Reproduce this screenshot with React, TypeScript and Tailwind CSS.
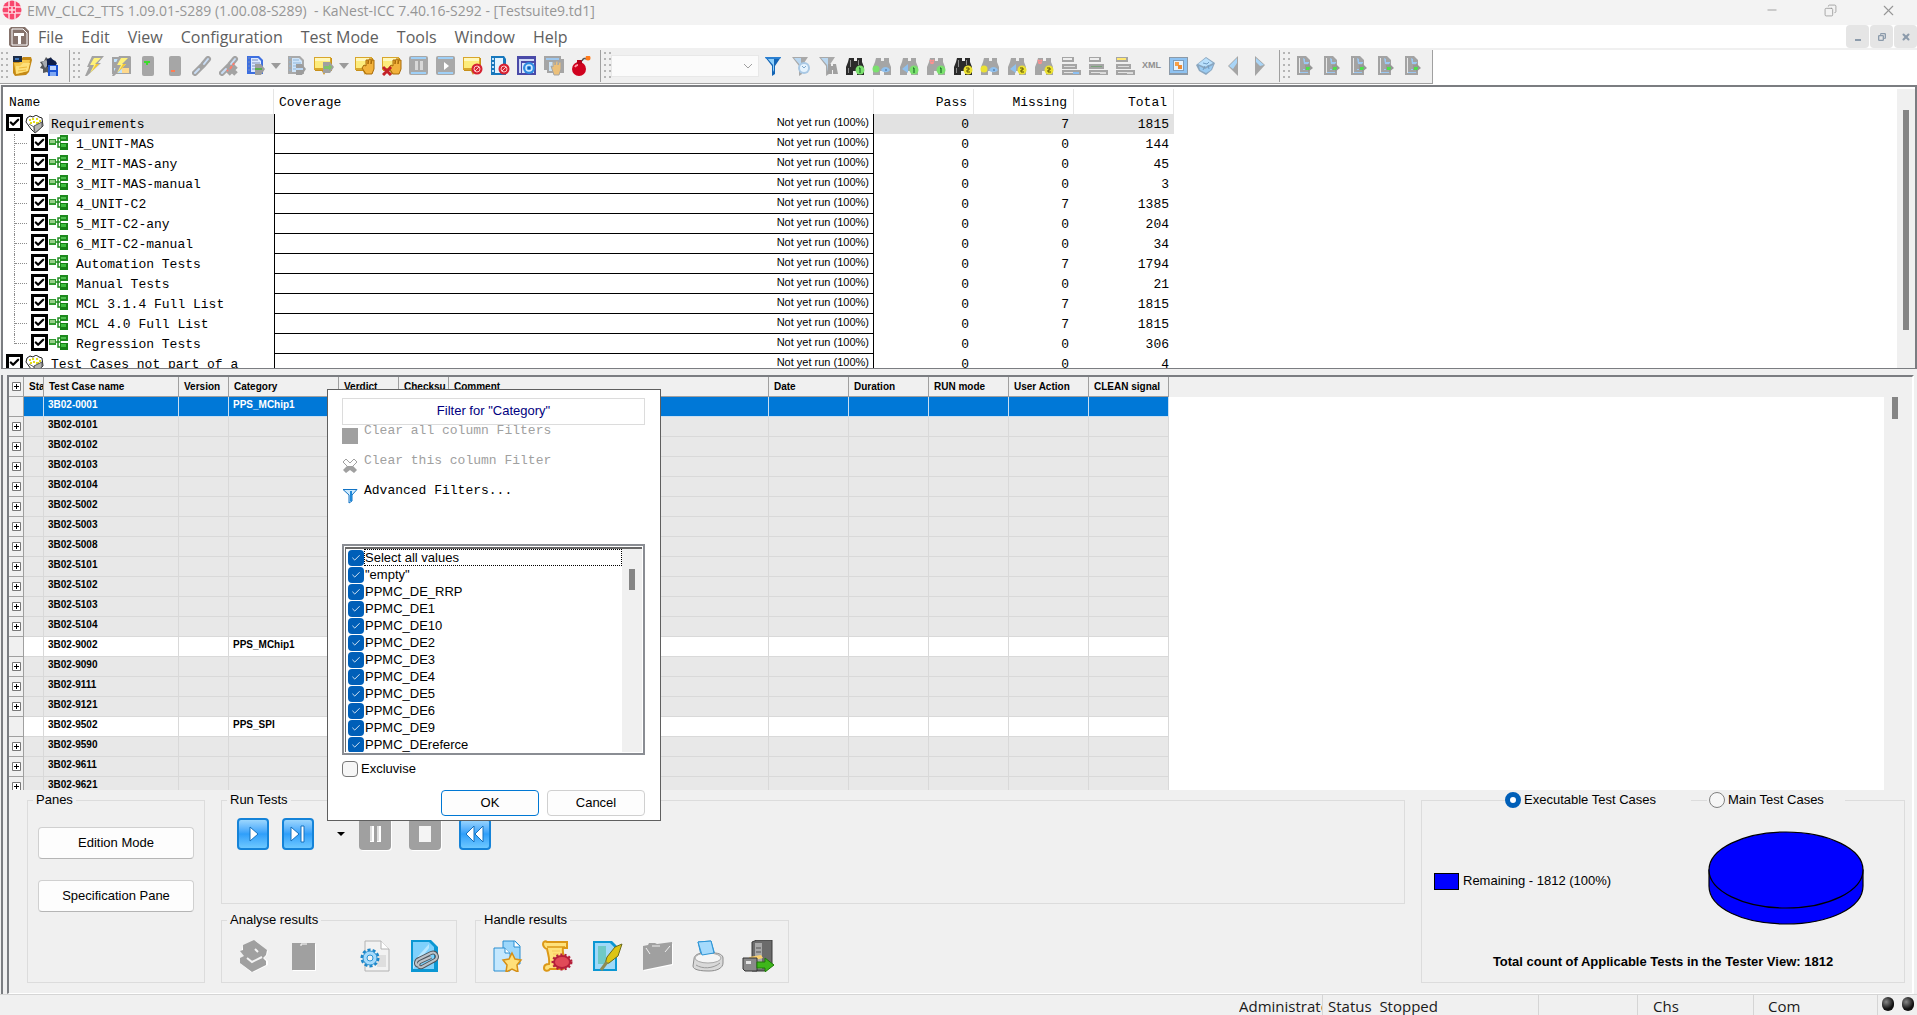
import type { ReactNode } from 'react'
import { Check, Copy, Minus, X } from 'lucide-react'

const menus = ['File', 'Edit', 'View', 'Configuration', 'Test Mode', 'Tools', 'Window', 'Help']

const requirements = [
    { name: 'Requirements', root: true, missing: 7, total: 1815 },
    { name: '1_UNIT-MAS', missing: 0, total: 144 },
    { name: '2_MIT-MAS-any', missing: 0, total: 45 },
    { name: '3_MIT-MAS-manual', missing: 0, total: 3 },
    { name: '4_UNIT-C2', missing: 7, total: 1385 },
    { name: '5_MIT-C2-any', missing: 0, total: 204 },
    { name: '6_MIT-C2-manual', missing: 0, total: 34 },
    { name: 'Automation Tests', missing: 7, total: 1794 },
    { name: 'Manual Tests', missing: 0, total: 21 },
    { name: 'MCL 3.1.4 Full List', missing: 7, total: 1815 },
    { name: 'MCL 4.0 Full List', missing: 7, total: 1815 },
    { name: 'Regression Tests', missing: 0, total: 306, last: true },
    { name: 'Test Cases not part of a', root: true, missing: 0, total: 4 },
]

const gridColumns = [
    { label: 'Sta', width: 'w-5' },
    { label: 'Test Case name', width: 'w-[135px]' },
    { label: 'Version', width: 'w-[50px]' },
    { label: 'Category', width: 'w-[110px]' },
    { label: 'Verdict', width: 'w-[60px]' },
    { label: 'Checksu', width: 'w-[50px]' },
    { label: 'Comment', width: 'w-80' },
    { label: 'Date', width: 'w-20' },
    { label: 'Duration', width: 'w-20' },
    { label: 'RUN mode', width: 'w-20' },
    { label: 'User Action', width: 'w-20' },
    { label: 'CLEAN signal', width: 'w-20' },
]

const testCases = [
    { name: '3B02-0001', category: 'PPS_MChip1', selected: true },
    { name: '3B02-0101' },
    { name: '3B02-0102' },
    { name: '3B02-0103' },
    { name: '3B02-0104' },
    { name: '3B02-5002' },
    { name: '3B02-5003' },
    { name: '3B02-5008' },
    { name: '3B02-5101' },
    { name: '3B02-5102' },
    { name: '3B02-5103' },
    { name: '3B02-5104' },
    { name: '3B02-9002', category: 'PPS_MChip1' },
    { name: '3B02-9090' },
    { name: '3B02-9111' },
    { name: '3B02-9121' },
    { name: '3B02-9502', category: 'PPS_SPI' },
    { name: '3B02-9590' },
    { name: '3B02-9611' },
    { name: '3B02-9621' },
]

const filterValues = [
    'Select all values', '"empty"', 'PPMC_DE_RRP', 'PPMC_DE1', 'PPMC_DE10', 'PPMC_DE2', 'PPMC_DE3',
    'PPMC_DE4', 'PPMC_DE5', 'PPMC_DE6', 'PPMC_DE9', 'PPMC_DEreferce',
]

/* ---------- toolbar icons, 20x20 ---------- */

function Svg({ children, size = 20 }: { children: ReactNode, size?: number }) {
    return <svg width={size} height={size} viewBox={`0 0 ${size} ${size}`} fill="none" aria-hidden="true">{children}</svg>
}

const FolderIcon = () => (
    <Svg>
        <path d="M1 3h8l2-2h8l1 3-3 12-3 3-11 1-2-3z" fill="#c58a17" />
        <path d="M2 7h5l3-3h8l-2 11-12 3z" fill="#f6c94e" />
        <path d="M4 10h4l3-3h7l-2 8-12 3z" fill="#fde07a" />
        <path d="M7 12l8-1M6 15l8-1" stroke="#eeb93a" />
        <path d="M1 0h9v6H1z" fill="#1c2c46" /><path d="M3 2h4v2H3z" fill="#3f74b8" />
    </Svg>
)

const SaveIcon = () => (
    <Svg>
        <path d="M7 1l2 2 3-2 1 3 4 1-1 3 3 2-8 9-3-3-4 1v-4L1 12l2-3-2-3 4-1z" fill="#55585c" />
        <path d="M3 6l4-2 3 4-4 4z" fill="#a7abb0" />
        <path d="M8 3l4-1 6 5-2 4H8z" fill="#0d1d4a" />
        <rect x="9" y="9" width="10" height="11" fill="#1c55d6" /><rect x="11" y="10" width="6" height="4" fill="#bcd4ff" /><rect x="11" y="16" width="6" height="4" fill="#7fa8f3" />
    </Svg>
)

const BoltIcon = ({ boxed = false }: { boxed?: boolean }) => (
    <Svg>
        {boxed && <><rect x="1" y="1" width="19" height="17" fill="#a3a3a3" /><path d="M3 3h4v3H3zM3 12h15v5H3z" fill="#bfe3ff" /><path d="M11 12h7v5h-7z" fill="#ffd98c" /></>}
        <path d="M8 0h12l-6 7h3L3 20H1l4-9H3z" fill="#a3a3a3" />
        <path d="M10 2h7l-6 6h4l-9 9 4-8H6z" fill="#fff27a" />
        <path d="M12 8h3l-7 7z" fill="#f4c534" />
    </Svg>
)

const ServerIcon = ({ on = false }: { on?: boolean }) => (
    <Svg>
        <rect x="4" y="0" width="12" height="20" rx="2" fill="#a6a6a6" />
        {on ? <path d="M6 5h6v2h-2v2H8V7H6z" fill="#3ddc2c" /> : <path d="M6 14h4v2H6z" fill="#ff7d55" />}
    </Svg>
)

const LinkIcon = ({ broken = false }: { broken?: boolean }) => (
    <Svg>
        <path d="M3 17l5-5 3-3 5-6" stroke="#a3a3a3" strokeWidth="6" strokeLinecap="round" />
        <path d="M3 17l4-4M12 8l4-5" stroke="#c9ddf5" strokeWidth="2" strokeLinecap="round" />
        {broken && <><path d="M9 10l8 8M17 10l-8 8" stroke="#a3a3a3" strokeWidth="5" /><path d="M13 10l-2 3M15 7l-1 2M8 15l1-1" stroke="#ff7b6b" strokeWidth="2" /></>}
    </Svg>
)

const ListIcon = ({ grey = false }: { grey?: boolean }) => (
    <Svg>
        <path d="M1 0h12l4 4v14H1z" fill={grey ? '#a9a9a9' : '#3d6fe0'} />
        <path d="M5 2h7l3 3v11H5z" fill={grey ? '#cfe4f8' : '#dce9ff'} />
        <path d="M6 4h6M6 7h8M6 10h8M6 13h8M2 2h2M2 6h2M2 10h2M2 14h2" stroke={grey ? '#8fb7dc' : '#7a8dba'} strokeWidth="1" />
        <path d="M9 8h6l4 5-4 6H9z" fill="#9d9d9d" />
        <path d="M9 12h7v2H9z" fill={grey ? '#bcd8f5' : '#59ad4c'} />
    </Svg>
)

type Badge = 'arrow' | 'hand' | 'handX' | 'no'

const NoSign = () => (
    <g transform="translate(9 8)"><circle cx="5" cy="5" r="5.5" fill="#d62232" /><circle cx="5" cy="5" r="3" stroke="#ffc5c5" /><path d="M3 7l4-4" stroke="#ffc5c5" /></g>
)

const NoteIcon = ({ badge }: { badge: Badge }) => (
    <Svg>
        <path d="M1 2h17v13h-6l-2 4-2-4H1z" fill="#c7901a" />
        <path d="M0 1h17v13H0z" fill="#d9a62b" /><path d="M1 2h15v10H1z" fill="#fdec7c" /><path d="M1 2h15v3H1z" fill="#fff8bd" />
        {badge === 'arrow' && <><path d="M9 6h7l4 5-4 6H9z" fill="#a0a0a0" /><path d="M10 10h5V8l3 3-3 4v-2h-5z" fill="#7fc46a" /></>}
        {(badge === 'hand' || badge === 'handX') && <path d="M9 9l2 1V4h2v4l1-5h2v5l1-4h2v9l-2 5h-6l-4-6z" fill="#f2b23c" stroke="#a86a08" strokeWidth="1" />}
        {badge === 'handX' && <path d="M1 11l8 8M9 11l-8 8" stroke="#c42228" strokeWidth="3" />}
        {badge === 'no' && <NoSign />}
    </Svg>
)

const MediaIcon = ({ play = false }: { play?: boolean }) => (
    <Svg>
        <rect width="19" height="19" rx="2" fill="#a8a8a8" />
        <path d="M2 1h15v2H2zM2 16h15v2H2z" fill="#9fd0f7" />
        {play ? <path d="M8 6l5 4-5 4z" fill="#fff" /> : <path d="M6 5h3v9H6zM11 5h3v9h-3z" fill="#d8d8d8" />}
    </Svg>
)

const ListNoIcon = () => (
    <Svg>
        <path d="M1 0h13l2 3v16H1z" fill="#1878bd" /><path d="M5 2h8v15H5z" fill="#e3f4ff" /><path d="M2 2h2v2H2zM2 6h2v2H2zM2 10h2v2H2zM2 14h2v2H2z" fill="#bfe3ff" />
        <NoSign />
    </Svg>
)

const WindowGearIcon = () => (
    <Svg>
        <rect width="19" height="19" fill="#4a4aa8" /><rect x="2" y="3" width="15" height="14" fill="#cfd9f6" /><rect x="4" y="5" width="13" height="12" fill="#4a4aa8" /><rect x="5" y="7" width="12" height="10" fill="#dbe6fa" />
        <circle cx="12" cy="12" r="6" fill="#2f8be0" /><circle cx="12" cy="12" r="3" stroke="#d5edff" strokeWidth="1.5" /><circle cx="12" cy="12" r="1" fill="#0b4f9a" />
    </Svg>
)

const WindowHandIcon = () => (
    <Svg>
        <path d="M0 0h17v3h3v14H3v-3H0z" fill="#a5a5a5" /><path d="M2 2h13v2H2z" fill="#9fc8ee" /><path d="M5 6h12v9H5z" fill="#cde3f5" />
        <path d="M7 10l2 1V6h2v3l1-4h2v4l1-3h2v7l-2 6h-5z" fill="#ecc07a" stroke="#a5a5a5" />
    </Svg>
)

const BombIcon = () => (
    <Svg>
        <circle cx="8" cy="13" r="7" fill="#d0021f" /><path d="M6 4h5v4H6z" fill="#b5001a" /><path d="M11 5c1-3 3-3 5-2" stroke="#555" strokeWidth="1.5" />
        <circle cx="17" cy="2" r="2.5" fill="#ff7a1a" /><path d="M4 11c1-2 2-2 3-2" stroke="#ff9aa6" strokeWidth="2" />
    </Svg>
)

const FunnelIcon = ({ badge }: { badge?: 'clock' | 'bino' }) => (
    <Svg>
        <path d="M1 1h16l-6 9v8l-3 2v-10z" fill={badge ? '#a9a9a9' : '#1465b5'} />
        <path d="M3 2h7v12l-1 2V9z" fill={badge ? '#b9d7f1' : '#8fd0fb'} />
        {!badge && <path d="M1 1h16l-1 2H2z" fill="#2a7fd1" />}
        {badge === 'clock' && <><circle cx="13" cy="12" r="6" fill="#a9c8e4" /><circle cx="13" cy="12" r="4" fill="#e6f3fd" /><path d="M11 10l2 2 2-2" stroke="#7fa8cc" /></>}
        {badge === 'bino' && <path d="M10 8h3v2h2V8h3l2 10h-5v-4h-1v4h-5z" fill="#a0a0a0" />}
    </Svg>
)

interface BinoProps {
    dark?: boolean
    tone: string
    mark?: 'next' | 'prev' | 'cross'
    digit?: boolean
}

const BinoIcon = ({ dark, tone, mark, digit }: BinoProps) => (
    <Svg>
        <path d="M4 2h5v3h3V2h5v4l2 5v8h-7v-4H8v4H1v-8l2-5z" fill={dark ? '#2b2b2b' : '#a5a5a5'} />
        {dark && <path d="M5 4h1v7H5zM13 4h1v5h-1zM3 12h1v5H3z" fill="#8a8a8a" />}
        {mark === 'next' && <><circle cx="4" cy="13" r="3.5" fill={tone} /><path d="M9 14c2-4 7-4 9 0-2 3-7 3-9 0z" fill="#8fc0ee" /><circle cx="14" cy="14" r="1" fill="#5d86b0" /></>}
        {mark === 'prev' && <path d="M9 8v9l-6-4z" fill="#8fc0ee" />}
        {mark === 'cross' && <path d="M4 4l4 4M8 4L4 8" stroke="#ff8f8f" strokeWidth="2" strokeDasharray="2 1" />}
        {mark !== 'next' && <><circle cx="15" cy="14" r="4.5" fill={tone} />{digit ? <path d="M13 12h3v2h-2v2h3" stroke="#5a5200" /> : <path d="M14 12h1v5" stroke="#0b5d1b" />}</>}
    </Svg>
)

const StackIcon = ({ top, mid, end }: { top?: string, mid?: string, end?: string }) => (
    <Svg>
        <path d="M1 1h12v5H1zM1 8h15v5H1zM1 14h19v5H1z" fill="#a5a5a5" />
        <path d="M2 2h9v2H2z" fill={top ?? '#eee'} /><path d="M3 10h11v1H3z" fill={mid ?? '#ddd'} /><path d="M3 16h9v1H3z" fill="#e4e4e4" /><path d="M12 16h6v2h-6z" fill={end ?? '#ddd'} />
    </Svg>
)

const XmlIcon = () => <span className="font-['Liberation_Sans'] text-[9px] font-bold text-[#8f8f8f]">XML</span>

const FrameIcon = () => (
    <Svg>
        <path d="M0 1h19v18H0z" fill="#8c9aa8" /><path d="M1 2h17v15H1z" fill="#8fc3f2" /><path d="M4 4h11v11H4z" fill="#7d9dbd" /><path d="M5 5h9v9H5z" fill="#e8f3fc" />
        <rect x="6" y="6" width="4" height="4" fill="#f6a04a" /><rect x="9" y="9" width="4" height="4" fill="#ef8b32" />
    </Svg>
)

const CubeIcon = () => (
    <Svg>
        <path d="M10 1l9 6-3 7-6 5-7-4-3-6z" fill="#8aa6bf" /><path d="M10 2l7 5-8 4-7-3z" fill="#b9e0fc" /><path d="M3 10l6 3 8-4-2 5-5 3-6-3z" fill="#9acbf2" /><path d="M7 7l4 1 2-2M9 10l-2 4M12 9l1 4" stroke="#6f9cc4" />
    </Svg>
)

const TriangleIcon = ({ right = false }: { right?: boolean }) => (
    <Svg>
        {right
            ? <><path d="M5 0l10 9-10 11z" fill="#a5a5a5" /><path d="M6 2l8 7-4 1-4-4z" fill="#a9d5f7" /></>
            : <><path d="M15 0v20L5 10z" fill="#a5a5a5" /><path d="M14 2v5l-4 6-4-3z" fill="#a9d5f7" /></>}
    </Svg>
)

const ReportIcon = () => (
    <Svg>
        <path d="M3 0h9l4 4v15H3z" fill="#a3a3a3" /><path d="M5 2h1v15H5z" fill="#e8e8e8" /><path d="M9 2l2 1v3h4v2h-5zM9 13h3v1H9zM6 16h8v1H6z" fill="#9cc8f2" />
        <path d="M11 9h3V7l5 5-5 4v-2h-3z" fill="#979797" /><path d="M12 11h3v-1l1 2-1 2h-3z" fill="#4be04b" />
    </Svg>
)

function Grip() {
    return (
        <svg width="7" height="30" viewBox="0 0 7 30" className="shrink-0" aria-hidden="true">
            {[0, 6, 12, 18, 24].map((y) => (
                <g key={y} fill="#b5b5b5">
                    <rect x="0" y={y + 1} width="2" height="2" />
                    <rect x="5" y={y + 1} width="2" height="2" />
                </g>
            ))}
        </svg>
    )
}

function Tool({ label, children }: { label: string, children: ReactNode }) {
    return <button type="button" aria-label={label} className="flex h-6 w-[27px] shrink-0 items-center justify-center">{children}</button>
}

function ToolCaret({ label }: { label: string }) {
    return (
        <button type="button" aria-label={label} className="flex h-6 w-3.5 shrink-0 items-center justify-center">
            <svg width="10" height="6" viewBox="0 0 10 6" aria-hidden="true"><path d="M0 0h10L5 6z" fill="#9b9b9b" /></svg>
        </button>
    )
}

/* ---------- window chrome ---------- */

function TitleBar() {
    return (
        <header className="flex h-[25px] shrink-0 items-start bg-[#f3f3f3] text-[#969696]">
            <svg width="22" height="22" viewBox="0 0 22 22" className="ml-px shrink-0" aria-hidden="true">
                <circle cx="11" cy="10" r="9.5" fill="#f8476d" />
                <path d="M8 1v18M14 1v18M2 7h18M2 13h18" stroke="#ffd9e1" strokeWidth="1.5" />
                <rect x="8" y="7" width="6" height="6" fill="#f8476d" />
                <path d="M11 7v6M8 10h6" stroke="#ffd9e1" strokeWidth="1.5" />
            </svg>
            <h1 className="ml-1 whitespace-pre font-['Open_Sans',sans-serif] text-[14px] leading-[21px]">EMV_CLC2_TTS 1.09.01-S289 (1.00.08-S289)  - KaNest-ICC 7.40.16-S292 - [Testsuite9.td1]</h1>
            <div className="ml-auto flex">
                <button type="button" aria-label="Minimize" className="flex h-5 w-[58px] items-center justify-center"><Minus size={14} strokeWidth={1.5} /></button>
                <button type="button" aria-label="Restore" className="flex h-5 w-[58px] items-center justify-center"><Copy size={13} strokeWidth={1.5} className="-scale-x-100" /></button>
                <button type="button" aria-label="Close" className="flex h-5 w-[58px] items-center justify-center"><X size={17} strokeWidth={1.5} /></button>
            </div>
        </header>
    )
}

function MenuBar() {
    return (
        <nav className="flex h-[25px] shrink-0 items-center border-b-2 border-[#f0f0f0] bg-white pl-[9px]">
            <svg width="20" height="20" viewBox="0 0 20 20" className="shrink-0" aria-hidden="true">
                <path d="M2 0h14l4 4v14l-2 2H2l-2-2V2z" fill="#85736c" /><path d="M3 2h11l4 4v12H3z" stroke="#fff" fill="none" /><path d="M5 6h10v3h-3v8H9V9H5z" fill="#fff" />
            </svg>
            {menus.map((item) => (
                <button key={item} type="button" className="px-[9px] font-['Open_Sans',sans-serif] text-[16px] leading-5 text-[#5e5e5e]">{item}</button>
            ))}
            <div className="ml-auto flex gap-px text-[#8c9bab]">
                <button type="button" aria-label="Minimize document" className="flex h-[23px] w-[23px] items-end justify-center rounded bg-[#e5e5e5] pb-[7px]"><span className="h-0.5 w-1.5 bg-[#8c9bab]" /></button>
                <button type="button" aria-label="Restore document" className="flex h-[23px] w-[23px] items-center justify-center rounded bg-[#e5e5e5]"><Copy size={8} strokeWidth={4} className="-scale-x-100" /></button>
                <button type="button" aria-label="Close document" className="flex h-[23px] w-[23px] items-center justify-center rounded bg-[#e5e5e5]"><X size={10} strokeWidth={5} /></button>
            </div>
        </nav>
    )
}

function ToolBar() {
    const green = '#7be06e'
    const yellow = '#ece233'
    return (
        <div className="flex h-[35px] shrink-0 items-start bg-white">
            <div className="flex h-[34px] items-center border-b border-r border-[#a0a0a0] bg-[#f0f0f0] pb-px pl-px">
                <Grip />
                <div className="flex h-8 items-center border-r border-[#a0a0a0] pr-[7px]">
                    <Tool label="Open"><FolderIcon /></Tool>
                    <Tool label="Save"><SaveIcon /></Tool>
                </div>
                <div className="flex h-8 items-center border-r border-[#a0a0a0] pl-[3px] pr-1.5">
                    <Grip />
                    <Tool label="Connect"><BoltIcon /></Tool>
                    <Tool label="Connect all"><BoltIcon boxed /></Tool>
                    <Tool label="Power on"><ServerIcon on /></Tool>
                    <Tool label="Power off"><ServerIcon /></Tool>
                    <Tool label="Link"><LinkIcon /></Tool>
                    <Tool label="Unlink"><LinkIcon broken /></Tool>
                    <Tool label="Run list"><ListIcon /></Tool>
                    <ToolCaret label="Run list options" />
                    <Tool label="Step list"><ListIcon grey /></Tool>
                    <Tool label="Next note"><NoteIcon badge="arrow" /></Tool>
                    <ToolCaret label="Next note options" />
                    <Tool label="Hold"><NoteIcon badge="hand" /></Tool>
                    <Tool label="Release"><NoteIcon badge="handX" /></Tool>
                    <Tool label="Pause"><MediaIcon /></Tool>
                    <Tool label="Play"><MediaIcon play /></Tool>
                    <Tool label="Disable note"><NoteIcon badge="no" /></Tool>
                    <Tool label="Disable list"><ListNoIcon /></Tool>
                    <Tool label="Window settings"><WindowGearIcon /></Tool>
                    <Tool label="Window hold"><WindowHandIcon /></Tool>
                    <Tool label="Abort"><BombIcon /></Tool>
                </div>
                <div className="flex h-8 items-center border-r border-[#a0a0a0] pl-[3px] pr-1.5">
                    <Grip />
                    <select aria-label="Search text" disabled className="h-[22px] w-[148px] appearance-none border border-[#e8e8e8] bg-[#fbfbfb]"><option></option></select>
                    <svg width="10" height="6" viewBox="0 0 10 6" fill="none" className="-ml-4 mr-[7px]" aria-hidden="true"><path d="M1 1l4 4 4-4" stroke="#a0a0a0" /></svg>
                    <Tool label="Filter"><FunnelIcon /></Tool>
                    <Tool label="Filter history"><FunnelIcon badge="clock" /></Tool>
                    <Tool label="Filter search"><FunnelIcon badge="bino" /></Tool>
                    <Tool label="Find 1"><BinoIcon dark tone={green} /></Tool>
                    <Tool label="Find 1 next"><BinoIcon tone={green} mark="next" /></Tool>
                    <Tool label="Find 1 previous"><BinoIcon tone={green} mark="prev" /></Tool>
                    <Tool label="Find 1 clear"><BinoIcon tone={green} mark="cross" /></Tool>
                    <Tool label="Find 2"><BinoIcon dark tone={yellow} digit /></Tool>
                    <Tool label="Find 2 next"><BinoIcon tone={yellow} mark="next" digit /></Tool>
                    <Tool label="Find 2 previous"><BinoIcon tone={yellow} mark="prev" digit /></Tool>
                    <Tool label="Find 2 clear"><BinoIcon tone={yellow} mark="cross" digit /></Tool>
                    <Tool label="Bottom level"><StackIcon end="#8cc0f2" /></Tool>
                    <Tool label="Middle level"><StackIcon mid="#79a279" /></Tool>
                    <Tool label="Top level"><StackIcon top="#ffe873" /></Tool>
                    <Tool label="Show XML"><XmlIcon /></Tool>
                    <Tool label="Frame"><FrameIcon /></Tool>
                    <Tool label="Package"><CubeIcon /></Tool>
                    <Tool label="Back"><TriangleIcon /></Tool>
                    <Tool label="Forward"><TriangleIcon right /></Tool>
                </div>
                <div className="flex h-8 items-center pl-[3px] pr-[7px]">
                    <Grip />
                    {[1, 2, 3, 4, 5].map((n) => (
                        <Tool key={n} label={`Report ${n}`}><ReportIcon /></Tool>
                    ))}
                </div>
            </div>
        </div>
    )
}

/* ---------- requirement tree ---------- */

const BoxIcon = () => (
    <svg width="19" height="19" viewBox="0 0 19 19" className="ml-0.5 shrink-0" aria-hidden="true">
        <path d="M2 3l3-2 3 1 3-2 3 2 3 1 1 8-8 7-4-4-5-7z" fill="#fff" stroke="#222" />
        <path d="M4 4h2v2H4zM7 3h2v2H7zM11 3h2v2h-2zM14 5h2v2h-2zM8 6h2v2H8zM5 7h2v2H5zM11 7h3v2h-3z" fill="#e3dc1e" />
        <path d="M9 11l8-4v5l-7 6z" fill="#b5b5b5" stroke="#555" /><path d="M4 9l5 3v5" stroke="#666" fill="none" />
    </svg>
)

const TreeIcon = () => (
    <svg width="19" height="15" viewBox="0 0 19 15" className="ml-px mr-2 mt-px shrink-0 self-start" aria-hidden="true">
        <path d="M7 7h5M9 7V3h3M9 7v5h3" stroke="#1e8a1e" strokeWidth="1.5" fill="none" />
        <rect x="0" y="4" width="7" height="6" fill="#2f9a2f" /><rect x="1" y="5" width="5" height="3" fill="#97cf8a" />
        <rect x="11" y="0" width="8" height="6" fill="#1e8a1e" /><rect x="12" y="2" width="5" height="2" fill="#52c152" />
        <rect x="11" y="8" width="8" height="7" fill="#168016" /><rect x="12" y="9" width="5" height="3" fill="#3fbd3f" />
    </svg>
)

function TreeCheck({ label }: { label: string }) {
    return (
        <span className="relative flex size-[17px] shrink-0 self-start">
            <input type="checkbox" defaultChecked aria-label={label} className="size-[17px] appearance-none border-[3px] border-black bg-white" />
            <Check size={11} strokeWidth={5} className="pointer-events-none absolute left-[3px] top-[3px]" />
        </span>
    )
}

function RequirementTree() {
    return (
        <section className="ml-px flex h-[284px] shrink-0 overflow-hidden border-2 border-b border-[#7b7d81] bg-white pt-0.5">
            <div className="min-w-0 flex-1 overflow-hidden">
                <table className="w-[1171px] table-fixed border-separate border-spacing-0 font-['Liberation_Mono',monospace] text-[13px] text-black">
                    <thead>
                        <tr className="h-[25px]">
                            <th className="w-[271px] border-r border-[#e5e5e5] p-0 pl-1.5 pt-0.5 text-left font-normal">Name</th>
                            <th className="w-[600px] border-r border-[#e5e5e5] p-0 pl-[5px] pt-0.5 text-left font-normal">Coverage</th>
                            <th className="w-[100px] border-r border-[#e5e5e5] p-0 pr-1.5 pt-0.5 text-right font-normal">Pass</th>
                            <th className="w-[100px] border-r border-[#e5e5e5] p-0 pr-1.5 pt-0.5 text-right font-normal">Missing</th>
                            <th className="w-[100px] border-r border-[#e5e5e5] p-0 pr-1.5 pt-0.5 text-right font-normal">Total</th>
                        </tr>
                    </thead>
                    <tbody>
                        {requirements.map((row, i) => {
                            const count = `p-0 pr-[5px] pt-0.5 text-right leading-[18px] ${i === 0 ? 'bg-[#e2e2e2]' : ''}`
                            return (
                                <tr key={row.name} className="h-5">
                                    <td className="h-5 p-0 leading-5">
                                        <div className="flex h-5 items-center overflow-hidden whitespace-nowrap">
                                            {row.root ? (
                                                <>
                                                    <span className="w-[3px] shrink-0" />
                                                    <TreeCheck label={row.name} />
                                                    <BoxIcon />
                                                    <span className={`ml-[5px] flex-1 pl-0.5 pt-0.5 leading-[18px] ${i === 0 ? 'bg-[#e2e2e2]' : ''}`}>{row.name}</span>
                                                </>
                                            ) : (
                                                <>
                                                    <span className={`ml-[11px] w-[17px] shrink-0 border-l border-dotted border-[#8c8c8c] ${row.last ? 'h-2.5 self-start' : 'h-5'}`}>
                                                        <span className="block h-2.5 w-3 border-b border-dotted border-[#8c8c8c]" />
                                                    </span>
                                                    <TreeCheck label={row.name} />
                                                    <TreeIcon />
                                                    <span className="pt-0.5 leading-[18px]">{row.name}</span>
                                                </>
                                            )}
                                        </div>
                                    </td>
                                    <td className="border-x border-b border-black p-0 pr-1 text-right align-top font-['Liberation_Sans',sans-serif] text-[11px] leading-4">Not yet run (100%)</td>
                                    <td className={count}>0</td>
                                    <td className={count}>{row.missing}</td>
                                    <td className={count}>{row.total}</td>
                                </tr>
                            )
                        })}
                    </tbody>
                </table>
            </div>
            <div className="flex w-[18px] justify-center bg-[#f0f0f0] pt-[21px]">
                <div className="h-[220px] w-1.5 bg-[#858585]" />
            </div>
        </section>
    )
}

/* ---------- test case grid ---------- */

function Expander({ label }: { label: string }) {
    return (
        <button type="button" aria-label={label} className="mx-auto block size-[9px]">
            <svg width="9" height="9" viewBox="0 0 9 9" aria-hidden="true"><path d="M.5 .5h8v8h-8z" fill="#fff" stroke="#777" /><path d="M2 4.5h5M4.5 2v5" stroke="#000" /></svg>
        </button>
    )
}

function TestGrid() {
    return (
        <div className="flex min-h-0 flex-1 overflow-hidden bg-[#f0f0f0]">
            <div className="min-w-0 flex-1 overflow-hidden bg-[linear-gradient(#f0f0f0_20px,#fff_20px)]">
                <table className="w-[1160px] table-fixed border-separate border-spacing-0 font-['Liberation_Sans',sans-serif] text-[10px] font-bold text-black">
                    <thead>
                        <tr className="h-5 bg-[#f0f0f0]">
                            <th className="w-[15px] border-b border-r border-[#a0a0a0] p-0"><Expander label="Expand all" /></th>
                            {gridColumns.map((col) => (
                                <th key={col.label} className={`${col.width} overflow-hidden whitespace-nowrap border-b border-r border-[#a0a0a0] p-0 pl-[5px] text-left leading-[18px]`}>{col.label}</th>
                            ))}
                        </tr>
                    </thead>
                    <tbody>
                        {testCases.map((row) => {
                            const tone = row.selected
                                ? 'bg-[#0078d7] text-white border-[#c9dff2]'
                                : row.category ? 'bg-white border-[#d9d9d9]' : 'bg-[#e8e8e8] border-[#d9d9d9]'
                            return (
                                <tr key={row.name} className="h-5">
                                    <td className="border-b border-r border-[#a0a0a0] bg-[#f0f0f0] p-0">{!row.category && <Expander label={`Expand ${row.name}`} />}</td>
                                    {gridColumns.map((col) => (
                                        <td key={col.label} className={`h-5 border-b border-r p-0 pl-1 align-top leading-4 ${tone}`}>
                                            {col.label === 'Test Case name' && row.name}
                                            {col.label === 'Category' && row.category}
                                        </td>
                                    ))}
                                </tr>
                            )
                        })}
                    </tbody>
                </table>
            </div>
            <div className="flex w-[28px] justify-start pl-2 pt-5">
                <div className="h-[22px] w-1.5 bg-[#858585]" />
            </div>
        </div>
    )
}

/* ---------- bottom panel ---------- */

function Group({ title, className, children }: { title: string, className: string, children: ReactNode }) {
    return (
        <fieldset className={`min-w-0 border border-[#dcdcdc] ${className}`}>
            <legend className="ml-[5px] px-[3px] leading-5">{title}</legend>
            {children}
        </fieldset>
    )
}

function BlueButton({ label, children }: { label: string, children: ReactNode }) {
    return (
        <button type="button" aria-label={label} className="flex size-8 items-center justify-center rounded border-2 border-[#1583d8] bg-linear-to-b from-[#9bd6fd] via-[#2f9ffa] to-[#6dc8ff]">
            <svg width="24" height="24" viewBox="0 0 24 24" fill="#fff" stroke="#1470bd" aria-hidden="true">{children}</svg>
        </button>
    )
}

function GreyButton({ label, children }: { label: string, children: ReactNode }) {
    return (
        <button type="button" aria-label={label} className="flex size-8 items-center justify-center rounded bg-[#a0a0a0] shadow-[1px_1px_0_#fff]">
            <svg width="24" height="24" viewBox="0 0 24 24" aria-hidden="true">{children}</svg>
        </button>
    )
}

function BigIcon({ label, children }: { label: string, children: ReactNode }) {
    return (
        <button type="button" aria-label={label} className="size-8 shrink-0">
            <svg width="32" height="32" viewBox="0 0 32 32" fill="none" aria-hidden="true">{children}</svg>
        </button>
    )
}

function AnalyseIcons() {
    return (
        <div className="flex pl-4 pt-2.5">
            <BigIcon label="Database">
                <path d="M5 6L18 1l12 10-1 4-3 3 4 3v4L14 33 3 24v-5l4-3-4-4z" fill="#fff" />
                <path d="M5 5L16 0l13 10-1 5-3 3 3 3v4L14 32 2 23v-5l4-2-4-5 3-1z" fill="#a0a0a0" />
                <path d="M9 18l5 4 10-5M17 9l3 3" stroke="#f4f4f4" strokeWidth="2" />
            </BigIcon>
            <div className="ml-[18px]"><BigIcon label="Clipboard">
                <rect x="5" y="4" width="23" height="27" fill="#fff" /><rect x="4" y="3" width="23" height="27" fill="#a0a0a0" /><path d="M13 6V4h6" stroke="#fff" />
            </BigIcon></div>
            <div className="ml-[39px]"><BigIcon label="Report settings">
                <path d="M6 1h16l8 8v22H6z" fill="#f2f2f2" stroke="#b2b2b2" /><path d="M22 1v8h8" fill="#fff" stroke="#b2b2b2" /><path d="M18 15h9v12h-9z" fill="#dedede" />
                <circle cx="11" cy="18" r="8" stroke="#1e86c8" strokeWidth="3" strokeDasharray="3 2" /><circle cx="11" cy="18" r="7" fill="#a6dafb" stroke="#2b93d4" /><circle cx="11" cy="18" r="3" fill="#f2f2f2" stroke="#2b93d4" />
            </BigIcon></div>
            <div className="ml-[18px]"><BigIcon label="Attachments">
                <path d="M2 0h20l7 7v25H2z" fill="#0b97d3" /><path d="M4 2h16l5 5v22H4z" fill="#7fd1fc" /><path d="M4 22L20 4v4L4 29z" fill="#b8e7ff" />
                <path d="M10 26c-5-1-3-6 0-7l12-6c5-2 8 4 4 7l-13 7c-4 1-5-3-2-5l11-5" stroke="#4d565e" strokeWidth="4" /><path d="M10 26c-5-1-3-6 0-7l12-6c5-2 8 4 4 7l-13 7c-4 1-5-3-2-5l11-5" stroke="#bcc2c8" strokeWidth="2" />
            </BigIcon></div>
        </div>
    )
}

function HandleIcons() {
    return (
        <div className="flex gap-[18px] pl-4 pt-2.5">
            <BigIcon label="New report">
                <path d="M11 1h12l5 5v18H11z" fill="#9cd7fb" stroke="#2b8ed0" /><path d="M2 8h11l5 5v18H2z" fill="#c5e8fe" stroke="#2b8ed0" /><path d="M22 1v6h6M13 8v5h5" fill="#fff" stroke="#2b8ed0" />
                <path d="M20 13l3 6 6 1-4 5 1 7-6-3-6 3 1-7-4-5 6-1z" fill="#ffe07a" stroke="#d58f16" strokeWidth="1.5" />
            </BigIcon>
            <BigIcon label="Certificate">
                <path d="M1 4c0-3 3-3 4-2h20v6h-4c-1 5 1 9 2 14l-2 7H8c-2 3-6 2-6-1 0-3 2-4 5-4 1-5-1-10-2-15C3 9 1 6 1 4z" fill="#ffe27b" stroke="#dc9817" strokeWidth="2" />
                <path d="M5 7h18" stroke="#dc9817" strokeWidth="1.5" /><path d="M10 11h8M11 14h6" stroke="#f6c75a" />
                <ellipse cx="20" cy="22" rx="9" ry="7" fill="#b51f3a" stroke="#b51f3a" strokeWidth="3" strokeDasharray="2 2" /><ellipse cx="20" cy="22" rx="7" ry="5" fill="#e14a58" />
            </BigIcon>
            <BigIcon label="Edit report">
                <path d="M1 1h19l5 5v25H1z" fill="#0b97d3" /><path d="M3 3h15l5 5v21H3z" fill="#9fd9f8" /><path d="M6 6h8v18H6z" fill="#6fc9c6" />
                <path d="M30 4l-7 3-8 10-2 7 4-1 9-7z" fill="#ddc514" stroke="#6a6a1c" /><path d="M15 22l-6 8" stroke="#8d8b55" strokeWidth="3" />
            </BigIcon>
            <BigIcon label="Envelope">
                <path d="M2 7l29-3v21L2 31z" fill="#fff" /><path d="M1 6l5-1 1-2h6l2 1 15-2v22L1 30z" fill="#a0a0a0" /><path d="M4 8l4 6M28 6l-5 6M10 6h8" stroke="#f0f0f0" />
            </BigIcon>
            <BigIcon label="Print">
                <path d="M6 2l13-1 4 14H9z" fill="#8ed0fb" stroke="#2e95d6" /><path d="M2 19c0-4 5-6 9-6h11c5 0 9 2 9 5v5c0 5-6 8-14 8S1 30 1 26z" fill="#d9d9d9" stroke="#8c8c8c" />
                <ellipse cx="16" cy="18" rx="13" ry="5" fill="#f5f5f5" stroke="#a8a8a8" /><path d="M4 25c6 4 17 4 24-2" stroke="#999" />
                <path d="M6 2l13-1 3 12-12 2z" fill="#a5dafc" stroke="#2e95d6" />
            </BigIcon>
            <BigIcon label="Export">
                <path d="M10 2l5-2h15v25l-8 6H10z" fill="#6b6b6b" stroke="#3b3b3b" /><path d="M13 3h7v26h-7z" fill="#a8a8a8" /><path d="M14 8h5M14 12h5" stroke="#555" />
                <path d="M7 17l12-2 2 3-12 3z" fill="#fbd06d" /><path d="M1 18h14v13H3l-2-2z" fill="#8a8a8a" stroke="#333" /><path d="M4 21h5v3H4z" fill="#e4e4e4" />
                <path d="M15 22h8v-4l9 7-9 7v-4h-8z" fill="#3fb61b" stroke="#1e7a08" />
            </BigIcon>
        </div>
    )
}

function ControlPanel() {
    const wide = 'h-8 w-full rounded border border-[#d0d0d0] border-b-[#b5b5b5] bg-[#fdfdfd]'
    return (
        <div className="flex shrink-0 gap-4 pb-2.5 pl-[18px] pr-[7px] font-['Liberation_Sans',sans-serif] text-[13px] text-black">
            <Group title="Panes" className="w-[178px] shrink-0">
                <div className="flex flex-col gap-[21px] px-2.5 pt-[17px]">
                    <button type="button" className={wide}>Edition Mode</button>
                    <button type="button" className={wide}>Specification Pane</button>
                </div>
            </Group>

            <div className="flex min-w-0 flex-1 flex-col gap-1.5">
                <Group title="Run Tests" className="h-[114px]">
                    <div className="flex items-center pl-[15px] pt-2">
                        <BlueButton label="Run"><path d="M9 5l8 7-8 7z" /></BlueButton>
                        <div className="ml-[13px]"><BlueButton label="Run to end"><path d="M5 5l8 7-8 7zM15 4h3v16h-3z" /></BlueButton></div>
                        <button type="button" aria-label="Run options" className="ml-[19px] flex w-4 justify-center">
                            <svg width="8" height="4" viewBox="0 0 8 4" aria-hidden="true"><path d="M0 0h8L4 4z" /></svg>
                        </button>
                        <div className="ml-2.5 flex gap-[18px]">
                            <GreyButton label="Pause"><path d="M7 4h4v16H7zM14 4h4v16h-4z" fill="#fff" /><path d="M7 4h2v15H7zM14 4h2v15h-2z" fill="#dedede" /></GreyButton>
                            <GreyButton label="Stop"><path d="M6 4h12v16H6z" fill="#f4f4f4" /></GreyButton>
                            <BlueButton label="Rewind"><path d="M11 4l-8 8 8 8zM20 4l-8 8 8 8z" /></BlueButton>
                        </div>
                    </div>
                </Group>
                <div className="flex gap-[18px]">
                    <Group title="Analyse results" className="h-[73px] w-[236px]"><AnalyseIcons /></Group>
                    <Group title="Handle results" className="h-[73px] w-[314px]"><HandleIcons /></Group>
                </div>
            </div>

            <fieldset className="w-[484px] shrink-0 border border-[#dcdcdc]">
                <legend className="ml-auto mr-[59px] flex items-center leading-5">
                    <input id="executable" type="radio" name="cases" defaultChecked className="size-4 appearance-none rounded-full border-[5px] border-[#005fb8] bg-white" />
                    <label htmlFor="executable" className="w-[170px] pl-[3px]">Executable Test Cases</label>
                    <span className="mr-0.5 h-px w-4 bg-[#dcdcdc]" />
                    <input id="main" type="radio" name="cases" className="size-4 appearance-none rounded-full border border-[#808080] bg-[#f6f6f6]" />
                    <label htmlFor="main" className="w-[120px] pl-[3px]">Main Test Cases</label>
                </legend>
                <div className="flex items-center justify-between pl-3 pr-10 pt-5">
                    <p className="flex items-center gap-1 pt-1.5"><span className="h-[17px] w-[25px] border border-black bg-[#0000ff]" />Remaining - 1812 (100%)</p>
                    <svg width="156" height="96" viewBox="0 0 156 96" fill="#0000ff" stroke="#000" strokeWidth="1.2" role="img" aria-label="Remaining 100%">
                        <path d="M1 40v16c0 22 34 38 77 38s77-16 77-38V40z" /><ellipse cx="78" cy="40" rx="77" ry="38" />
                    </svg>
                </div>
                <p className="pt-[26px] text-center font-bold leading-5">Total count of Applicable Tests in the Tester View: 1812</p>
            </fieldset>
        </div>
    )
}

/* ---------- filter popup ---------- */

function FilterDialog() {
    const command = 'flex h-5 gap-1.5 text-left'
    return (
        <div role="dialog" aria-label="Filter" className="absolute left-[327px] top-[389px] w-[334px] border border-[#5f5f5f] bg-white pb-1 pl-3.5 pr-[15px] pt-2 font-['Liberation_Sans',sans-serif] text-[13px] text-black">
            <h2 className="border border-[#dcdcdc] pb-0.5 text-center leading-[23px] text-[#000080]">Filter for "Category"</h2>
            <div className="flex flex-col gap-2.5 font-['Liberation_Mono',monospace] leading-5">
                <button type="button" className={`${command} text-[#a0a0a0]`}><span className="mt-[3px] size-4 bg-[#a0a0a0]" /><span className="-mt-1">Clear all column Filters</span></button>
                <button type="button" className={`${command} text-[#a0a0a0]`}>
                    <svg width="16" height="16" viewBox="0 0 16 16" fill="none" className="mt-[3px]" aria-hidden="true"><path d="M1 4l3-3 4 4 4-4 3 3-4 4M5 8L1 4" stroke="#a0a0a0" /><path d="M5 8h6l4 4-3 3-4-3-4 3-3-3z" fill="#a0a0a0" /></svg>
                    <span className="-mt-1">Clear this column Filter</span>
                </button>
                <button type="button" className={command}>
                    <svg width="16" height="16" viewBox="0 0 16 16" className="mt-[3px]" aria-hidden="true"><path d="M1 1.5h14L10 7v6l-3 2V7z" fill="#cdeafe" stroke="#1273c4" /><path d="M9 3v10" stroke="#1e88d8" strokeWidth="2" /></svg>
                    <span className="-mt-1">Advanced Filters...</span>
                </button>
            </div>
            <div className="mt-[39px] flex h-[211px] border-2 border-[#8a8d93] p-px">
                <div className="flex min-w-0 flex-1 overflow-hidden border-l border-t-2 border-l-[#696969] border-t-[#696969]">
                    <ul className="min-w-0 flex-1 overflow-hidden pl-0.5">
                        {filterValues.map((value, i) => (
                            <li key={value} className="relative flex h-[17px] items-center">
                                <input id={`value-${i}`} type="checkbox" defaultChecked className="size-4 shrink-0 appearance-none rounded-sm bg-[#005fb8]" />
                                <Check size={10} strokeWidth={2} className="pointer-events-none absolute left-[3px] top-1 text-white" />
                                <label htmlFor={`value-${i}`} className={`flex-1 leading-[15px] ${i === 0 ? 'border border-dotted border-black' : 'border border-transparent'}`}>{value}</label>
                            </li>
                        ))}
                    </ul>
                    <div className="flex w-5 justify-center bg-[#f0f0f0] pt-5"><div className="h-[21px] w-1.5 bg-[#858585]" /></div>
                </div>
            </div>
            <div className="mt-[5px] flex items-center gap-[3px]">
                <input id="exclusive" type="checkbox" className="size-4 appearance-none rounded border border-[#777] bg-[#f6f6f6]" />
                <label htmlFor="exclusive" className="leading-[18px]">Excluvise</label>
            </div>
            <div className="mt-3 flex justify-end gap-2">
                <button type="button" className="h-[26px] w-[98px] rounded border border-[#0078d4] bg-[#fdfdfd]">OK</button>
                <button type="button" className="h-[26px] w-[98px] rounded border border-[#d0d0d0] bg-[#fdfdfd]">Cancel</button>
            </div>
        </div>
    )
}

function StatusBar() {
    const ball = 'h-3.5 w-3 rounded-full bg-[radial-gradient(circle_at_35%_35%,#888,#111_60%)]'
    return (
        <footer className="flex h-[21px] shrink-0 justify-end border-t border-[#d5d5d5] bg-[#f0f0f0] font-['Open_Sans',sans-serif] text-[15px] leading-[22px] text-[#1a1a1a]">
            <span className="w-[84px] overflow-hidden border-r border-[#d5d5d5]">Administrator</span>
            <span className="w-[216px] whitespace-pre border-r border-[#d5d5d5] pl-[5px]">Status  Stopped</span>
            <span className="w-[99px] border-r border-[#d5d5d5]" />
            <span className="w-[116px] border-r border-[#d5d5d5] pl-[15px]">Chs</span>
            <span className="w-[124px] border-r border-[#d5d5d5] pl-3.5">Com</span>
            <span className="flex w-[39px] gap-2 pl-1 pt-0.5"><i className={ball} /><i className={ball} /></span>
        </footer>
    )
}

export default function App() {
    return (
        <div className="relative flex h-screen flex-col overflow-hidden bg-[#f0f0f0]">
            <TitleBar />
            <MenuBar />
            <ToolBar />
            <RequirementTree />
            <main className="ml-px mt-1.5 flex min-h-0 flex-1 border-l-2 border-[#7b7d81] pl-1">
                <div className="mr-[3px] flex min-w-0 flex-1 flex-col border-b border-l-2 border-r-2 border-t-2 border-b-white border-l-[#7b7d81] border-r-white border-t-[#7b7d81]">
                    <TestGrid />
                    <ControlPanel />
                </div>
            </main>
            <StatusBar />
            <FilterDialog />
        </div>
    )
}
